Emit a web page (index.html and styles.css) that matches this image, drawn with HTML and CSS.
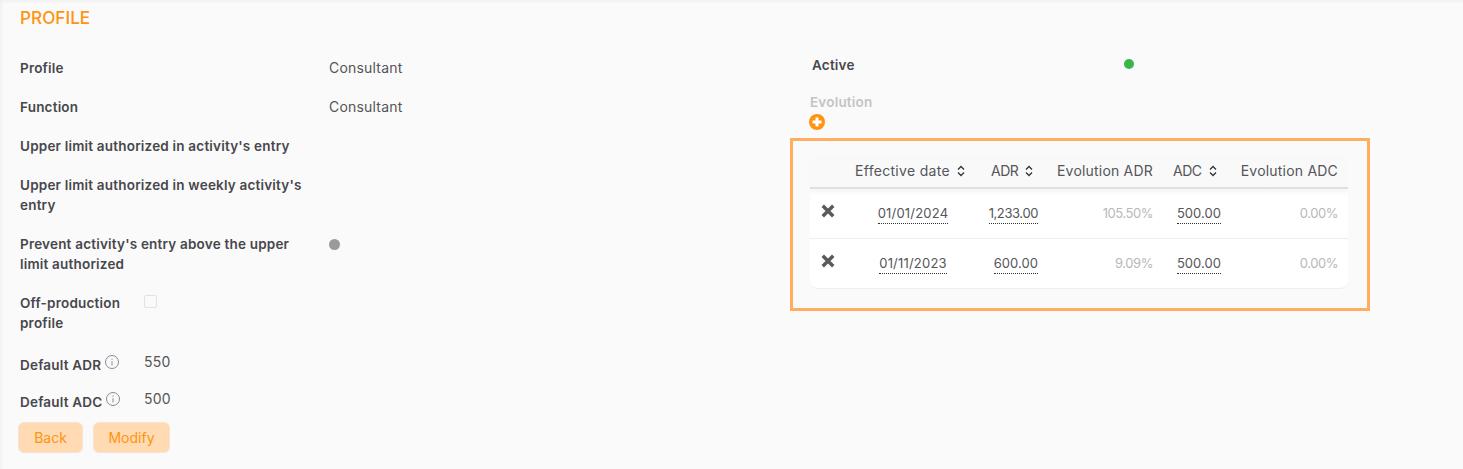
FILE: index.html
```html
<!DOCTYPE html>
<html lang="en">
<head>
<meta charset="utf-8">
<title>Profile</title>
<link rel="stylesheet" href="styles.css">
</head>
<body>
<main class="page">
  <h1 class="title">PROFILE</h1>
  <div class="columns">
    <section class="left">
      <div class="row"><div class="label">Profile</div><div class="value">Consultant</div></div>
      <div class="row"><div class="label">Function</div><div class="value">Consultant</div></div>
      <div class="row"><div class="label">Upper limit authorized in activity's entry</div></div>
      <div class="row"><div class="label">Upper limit authorized in weekly activity's entry</div></div>
      <div class="row"><div class="label">Prevent activity's entry above the upper limit authorized</div><div class="value"><span class="dot dot-grey"></span></div></div>
      <div class="row row-short"><div class="label">Off-production profile</div><div class="value"><span class="checkbox"></span></div></div>
      <div class="row row-short row-num"><div class="label">Default ADR <svg class="info" viewBox="0 0 14 14"><circle cx="7" cy="7" r="6.500"/><path d="M7 6.200v4.300M7 3.400v1.300"/></svg></div><div class="value">550</div></div>
      <div class="row row-short row-num"><div class="label">Default ADC <svg class="info" viewBox="0 0 14 14"><circle cx="7" cy="7" r="6.500"/><path d="M7 6.200v4.300M7 3.400v1.300"/></svg></div><div class="value">500</div></div>
      <div class="buttons"><button class="btn">Back</button><button class="btn">Modify</button></div>
    </section>
    <section class="right">
      <div class="active-row"><div class="active-label">Active</div><span class="dot dot-green"></span></div>
      <div class="evolution">Evolution</div>
      <svg class="plus" viewBox="0 0 16 16"><circle cx="8" cy="8" r="8"/><path d="M8 3.500v9M3.500 8h9"/></svg>
      <div class="highlight">
        <table class="grid">
          <colgroup><col class="c1"><col class="c2"><col class="c3"><col class="c4"><col class="c5"><col class="c6"></colgroup>
          <thead>
            <tr>
              <th></th>
              <th class="wide">Effective date <svg class="sort" viewBox="0 0 8 12"><path d="M1 4.500 4 1.500l3 3M1 7.500l3 3 3-3"/></svg></th>
              <th><span class="abbr">ADR</span> <svg class="sort" viewBox="0 0 8 12"><path d="M1 4.500 4 1.500l3 3M1 7.500l3 3 3-3"/></svg></th>
              <th class="end">Evolution ADR</th>
              <th><span class="abbr">ADC</span> <svg class="sort" viewBox="0 0 8 12"><path d="M1 4.500 4 1.500l3 3M1 7.500l3 3 3-3"/></svg></th>
              <th class="end">Evolution ADC</th>
            </tr>
          </thead>
          <tbody>
            <tr>
              <td><svg class="cross" viewBox="0 0 12 12"><path d="M1.500 1.500l9 9M10.500 1.500l-9 9"/></svg></td>
              <td class="center"><span class="edit date">01/01/2024</span></td>
              <td class="end"><span class="edit tight">1,233.00</span></td>
              <td class="end muted">105.50%</td>
              <td class="end"><span class="edit">500.00</span></td>
              <td class="end muted">0.00%</td>
            </tr>
            <tr>
              <td><svg class="cross" viewBox="0 0 12 12"><path d="M1.500 1.500l9 9M10.500 1.500l-9 9"/></svg></td>
              <td class="center"><span class="edit date">01/11/2023</span></td>
              <td class="end"><span class="edit">600.00</span></td>
              <td class="end muted">9.09%</td>
              <td class="end"><span class="edit">500.00</span></td>
              <td class="end muted">0.00%</td>
            </tr>
          </tbody>
        </table>
      </div>
    </section>
  </div>
</main>
</body>
</html>
```
FILE: styles.css
```css
* { box-sizing: border-box; }
html, body { margin: 0; height: 100%; }
body {
  background: #fafafa;
  color: #4a4a4f;
  font-family: "Inter", "Liberation Sans", sans-serif;
  font-size: 14px;
  letter-spacing: 0.2px;
  line-height: 20px;
  overflow: hidden;
  box-shadow: inset 2px 2px 3px rgba(0, 0, 0, 0.04);
}
.page { padding: 8px 93px 0 20px; }
.title {
  margin: 0;
  font-size: 17.200px;
  line-height: 20px;
  font-weight: 500;
  letter-spacing: 0;
  color: #ff9410;
}
.columns { display: flex; margin-top: 30px; }
.left { width: 770px; flex: none; }
.row { display: flex; align-items: flex-start; margin-bottom: 19px; }
.label { width: 309px; flex: none; padding-right: 10px; font-size: 13.500px; font-weight: 600; color: #47474c; }
.value { color: #555; }
.row-short .label { width: 124px; padding-right: 0; }
.row-num { margin-bottom: 17px; }
.row-num .label { height: 20px; padding-top: 3px; white-space: nowrap; }
.info { width: 14px; height: 14px; margin-left: 0; vertical-align: 1px; fill: none; stroke: #8a8a8a; stroke-width: 1; }
.dot { display: block; width: 11px; height: 11px; border-radius: 50%; }
.dot-grey { background: #9a9a9a; margin-top: 5px; }
.dot-green { background: #39b54a; width: 10px; height: 10px; }
.checkbox { display: block; width: 13px; height: 13px; margin-top: 2px; border: 1px solid #e2e2e2; border-radius: 2px; background: #fafafa; }
.buttons { display: flex; gap: 10px; margin: -4px 0 0 -2px; }
.btn {
  width: 65px;
  height: 31px;
  padding: 0;
  border: 1px solid #f7e3d0;
  border-radius: 6px;
  background: #ffdab3;
  color: #ff9410;
  font: inherit;
  letter-spacing: 0;
}
.btn + .btn { width: 77px; }
.right { flex: 1; min-width: 0; }
.active-row { display: flex; align-items: center; margin: -3px 0 0 22px; }
.active-label { width: 312px; font-size: 13.500px; font-weight: 600; color: #47474c; }
.dot-green { margin-top: -2px; }
.evolution { margin: 17px 0 0 20px; font-size: 13.500px; font-weight: 600; color: #c4c4c6; }
.plus { display: block; width: 16px; height: 16px; margin: 2px 0 8px 19px; }
.plus circle { fill: #ff9410; }
.plus path { stroke: #fff; stroke-width: 3; fill: none; }
.highlight {
  width: 580px;
  height: 173px;
  padding: 14px 19px 0 17px;
  border: 3px solid #ffad60;
}
.grid { width: 538px; table-layout: fixed; border-collapse: separate; border-spacing: 0; }
.c1 { width: 35px; }
.c2 { width: 136px; }
.c3 { width: 67px; }
.c4 { width: 115px; }
.c5 { width: 68px; }
.c6 { width: 117px; }
th {
  height: 34px;
  padding: 0 10px;
  text-align: left;
  font-weight: 400;
  white-space: nowrap;
  color: #55555a;
  background: #f9f9f9;
  border-bottom: 2px solid #e0e0e0;
}
th:first-child { border-top-left-radius: 8px; }
th:last-child { border-top-right-radius: 8px; }
th.wide { letter-spacing: 0.300px; }
th.end { padding-left: 0; }
.abbr { letter-spacing: -0.500px; }
td {
  height: 50px;
  padding: 0 10px 2px;
  background: #fff;
  border-bottom: 1px solid #eeeeee;
  color: #55555a;
  font-size: 13px;
  letter-spacing: 0.050px;
}
tbody tr:first-child td { background: linear-gradient(#f6f6f6, #fff 7px); }
td.end { padding-left: 0; }
.center { text-align: center; }
.end { text-align: right; }
.muted { color: #b8b8ba; letter-spacing: -0.450px; }
.edit { padding-bottom: 2px; border-bottom: 1px dotted #333; }
.date { letter-spacing: 0.200px; }
.tight { letter-spacing: -0.400px; }
.sort { width: 8px; height: 12px; margin-left: 3px; vertical-align: -1px; fill: none; stroke: #333; stroke-width: 1.300; }
.cross { display: block; width: 14px; height: 14px; margin: -3px 0 0 1px; fill: none; stroke: #5a5a5a; stroke-width: 3; }
tbody tr:last-child td:first-child { border-bottom-left-radius: 8px; }
tbody tr:last-child td:last-child { border-bottom-right-radius: 8px; }
```
